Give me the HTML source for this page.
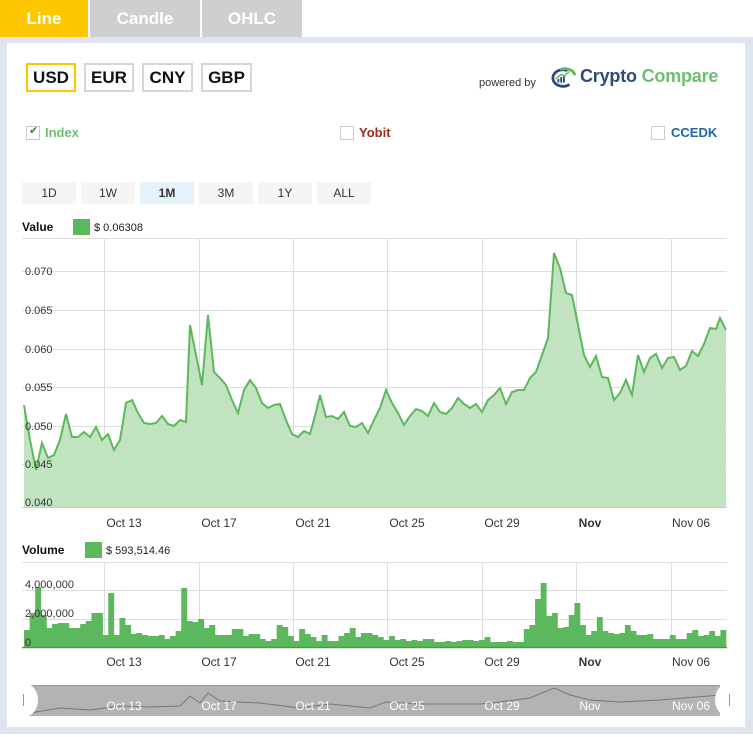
<!DOCTYPE html>
<html><head><meta charset="utf-8"><style>
*{margin:0;padding:0;box-sizing:border-box}
body{width:753px;height:737px;background:#fff;font-family:"Liberation Sans",sans-serif;position:relative;overflow:hidden}
.tab{position:absolute;top:0;height:37px;line-height:37px;text-align:center;color:#fff;font-weight:bold;font-size:17px}
.panel{position:absolute;left:0;top:37px;width:753px;height:697px;background:#dfe5ee}
.inner{position:absolute;left:7px;top:43px;width:738px;height:684px;background:#fff}
.cur{position:absolute;top:63px;height:29px;line-height:25px;border:2px solid #d6d6d6;font-weight:bold;font-size:17px;text-align:center;color:#111}
.rng{position:absolute;top:182px;height:22px;line-height:22px;background:#f5f5f5;font-size:12px;text-align:center;color:#333}
.cb{position:absolute;top:126px;width:14px;height:14px;border:1px solid #ccc}
.lab{position:absolute;font-size:13px;font-weight:bold}
.ax{font-size:11px;fill:#333;font-family:"Liberation Sans",sans-serif}
</style></head><body>
<div class="tab" style="left:0;width:88px;background:#fdc800">Line</div>
<div class="tab" style="left:90px;width:110px;background:#cfcfcf">Candle</div>
<div class="tab" style="left:202px;width:100px;background:#cfcfcf">OHLC</div>
<div class="panel"></div><div class="inner"></div>
<div class="cur" style="left:26px;width:50px;border-color:#fdc800">USD</div>
<div class="cur" style="left:84px;width:50px">EUR</div>
<div class="cur" style="left:142px;width:51px">CNY</div>
<div class="cur" style="left:201px;width:51px">GBP</div>
<div style="position:absolute;left:479px;top:77px;font-size:11px;color:#333">powered by</div>
<svg style="position:absolute;left:546px;top:66px" width="34" height="24" viewBox="0 0 34 26"><path d="M22 5 A11 9 0 1 0 24 20" fill="none" stroke="#2d4a7a" stroke-width="3"/><path d="M14 4 A11 9 0 0 1 30 10" fill="none" stroke="#5cb85c" stroke-width="3"/><rect x="11" y="14" width="2" height="4" fill="#2d4a7a"/><rect x="14" y="12" width="2" height="6" fill="#2d4a7a"/><rect x="17" y="10" width="2" height="8" fill="#2d4a7a"/><path d="M9 14 L15 9 L18 11 L24 6" stroke="#5cb85c" stroke-width="1.5" fill="none"/></svg>
<div style="position:absolute;left:580px;top:66px;font-size:18px;font-weight:bold;color:#2d4a7a;letter-spacing:-0.2px">Crypto <span style="color:#6cc070">Compare</span></div>
<div class="cb" style="left:26px"><span style="position:absolute;left:2px;top:-3px;font-size:11px;color:#3a7a3a">✔</span></div>
<div class="lab" style="left:45px;top:125px;color:#6cc070">Index</div>
<div class="cb" style="left:340px"></div>
<div class="lab" style="left:359px;top:125px;color:#9b2d14">Yobit</div>
<div class="cb" style="left:651px"></div>
<div class="lab" style="left:671px;top:125px;color:#1d65a6">CCEDK</div>
<div class="rng" style="left:22px;width:54px">1D</div>
<div class="rng" style="left:81px;width:54px">1W</div>
<div class="rng" style="left:140px;width:54px;background:#e6f2fa;font-weight:bold">1M</div>
<div class="rng" style="left:199px;width:54px">3M</div>
<div class="rng" style="left:258px;width:54px">1Y</div>
<div class="rng" style="left:317px;width:54px">ALL</div>
<svg style="position:absolute;left:0;top:0" width="753" height="737">
<g font-family="Liberation Sans,sans-serif">
<text x="22" y="231" font-size="12" font-weight="bold" fill="#111">Value</text>
<rect x="73" y="219" width="17" height="16" fill="#5cb85c"/>
<text x="94" y="231" font-size="11" fill="#222">$ 0.06308</text>
<text x="22" y="554" font-size="12" font-weight="bold" fill="#111">Volume</text>
<rect x="85" y="542" width="17" height="16" fill="#5cb85c"/>
<text x="106" y="554" font-size="11" fill="#222">$ 593,514.46</text>
</g>
<g stroke="#ddd" stroke-width="1">
<line x1="22" y1="238.5" x2="727" y2="238.5"/>
<line x1="22" y1="271.5" x2="727" y2="271.5"/><line x1="22" y1="310.5" x2="727" y2="310.5"/><line x1="22" y1="349.5" x2="727" y2="349.5"/><line x1="22" y1="387.5" x2="727" y2="387.5"/><line x1="22" y1="426.5" x2="727" y2="426.5"/><line x1="22" y1="464.5" x2="727" y2="464.5"/>
<line x1="22" y1="562.5" x2="727" y2="562.5"/><line x1="22" y1="590.5" x2="727" y2="590.5"/><line x1="22" y1="619.5" x2="727" y2="619.5"/>
<g><line x1="104.5" y1="238" x2="104.5" y2="507"/><line x1="199.5" y1="238" x2="199.5" y2="507"/><line x1="293.5" y1="238" x2="293.5" y2="507"/><line x1="387.5" y1="238" x2="387.5" y2="507"/><line x1="482.5" y1="238" x2="482.5" y2="507"/><line x1="576.5" y1="238" x2="576.5" y2="507"/><line x1="671.5" y1="238" x2="671.5" y2="507"/></g>
<g><line x1="104.5" y1="562" x2="104.5" y2="648"/><line x1="199.5" y1="562" x2="199.5" y2="648"/><line x1="293.5" y1="562" x2="293.5" y2="648"/><line x1="387.5" y1="562" x2="387.5" y2="648"/><line x1="482.5" y1="562" x2="482.5" y2="648"/><line x1="576.5" y1="562" x2="576.5" y2="648"/><line x1="671.5" y1="562" x2="671.5" y2="648"/></g>
</g>
<polygon fill="#c2e3c0" points="24,507 24,405 30,440 36,470 42,443 48,458 54,455 60,440 66,414 72,437 78,437 84,432 90,437 96,427 102,440 108,434 114,450 120,440 126,403 132,400 138,413 144,423 150,424 156,423 162,416 168,424 174,426 180,420 186,422 190,325 196,355 202,385 208,315 214,372 220,378 226,385 232,400 238,413 244,390 250,380 256,388 262,403 268,408 274,405 280,404 286,420 292,434 298,437 304,431 310,434 316,412 320,395 326,417 332,416 338,419 344,412 350,426 356,427 362,423 368,433 374,420 380,408 386,390 392,403 398,413 404,425 410,416 416,409 422,411 428,416 434,403 440,412 446,414 452,408 458,398 464,404 470,408 476,404 482,412 488,400 494,395 500,388 506,404 512,392 518,390 524,390 530,378 536,372 542,355 548,338 554,253 560,268 566,293 572,295 578,325 584,355 590,367 596,356 602,377 608,378 614,400 620,393 626,380 632,395 638,355 644,372 650,358 656,354 662,368 668,358 674,357 680,370 686,366 692,351 698,356 704,344 710,328 716,329 720,318 726,330 726,507"/>
<polyline fill="none" stroke="#5cb85c" stroke-width="2" points="24,405 30,440 36,470 42,443 48,458 54,455 60,440 66,414 72,437 78,437 84,432 90,437 96,427 102,440 108,434 114,450 120,440 126,403 132,400 138,413 144,423 150,424 156,423 162,416 168,424 174,426 180,420 186,422 190,325 196,355 202,385 208,315 214,372 220,378 226,385 232,400 238,413 244,390 250,380 256,388 262,403 268,408 274,405 280,404 286,420 292,434 298,437 304,431 310,434 316,412 320,395 326,417 332,416 338,419 344,412 350,426 356,427 362,423 368,433 374,420 380,408 386,390 392,403 398,413 404,425 410,416 416,409 422,411 428,416 434,403 440,412 446,414 452,408 458,398 464,404 470,408 476,404 482,412 488,400 494,395 500,388 506,404 512,392 518,390 524,390 530,378 536,372 542,355 548,338 554,253 560,268 566,293 572,295 578,325 584,355 590,367 596,356 602,377 608,378 614,400 620,393 626,380 632,395 638,355 644,372 650,358 656,354 662,368 668,358 674,357 680,370 686,366 692,351 698,356 704,344 710,328 716,329 720,318 726,330"/>
<line x1="22" y1="507.5" x2="727" y2="507.5" stroke="#ccc"/>
<g id="bars" fill="#5cb85c"></g>
<line x1="22" y1="647.5" x2="727" y2="647.5" stroke="#4a9a4a" stroke-width="1.5"/>
<g class="ax">
<text x="25" y="275" class="ax">0.070</text><text x="25" y="314" class="ax">0.065</text><text x="25" y="353" class="ax">0.060</text><text x="25" y="391" class="ax">0.055</text><text x="25" y="430" class="ax">0.050</text><text x="25" y="468" class="ax">0.045</text><text x="25" y="506" class="ax">0.040</text>
<text x="25" y="588" class="ax">4,000,000</text><text x="25" y="617" class="ax">2,000,000</text><text x="25" y="646" class="ax">0</text>
</g>
<g font-size="12" fill="#333" font-family="Liberation Sans,sans-serif" text-anchor="middle">
<text x="124" y="527">Oct 13</text><text x="219" y="527">Oct 17</text><text x="313" y="527">Oct 21</text><text x="407" y="527">Oct 25</text><text x="502" y="527">Oct 29</text><text x="590" y="527" font-weight="bold">Nov</text><text x="691" y="527">Nov 06</text>
<text x="124" y="666">Oct 13</text><text x="219" y="666">Oct 17</text><text x="313" y="666">Oct 21</text><text x="407" y="666">Oct 25</text><text x="502" y="666">Oct 29</text><text x="590" y="666" font-weight="bold">Nov</text><text x="691" y="666">Nov 06</text>
</g>
<rect x="28" y="685" width="692" height="31" fill="#b3b3b3"/>
<line x1="28" y1="685.5" x2="720" y2="685.5" stroke="#999"/>
<polyline fill="none" stroke="#777" stroke-width="1" points="30,713 60,708 90,710 120,706 150,707 180,706 190,696 200,703 208,693 220,701 260,703 300,708 330,704 370,708 386,702 420,704 480,704 500,702 530,698 554,688 570,695 590,700 620,702 660,700 720,695"/>
<g fill="#fff" font-size="12" font-family="Liberation Sans,sans-serif" text-anchor="middle">
<text x="124" y="710">Oct 13</text><text x="219" y="710">Oct 17</text><text x="313" y="710">Oct 21</text><text x="407" y="710">Oct 25</text><text x="502" y="710">Oct 29</text><text x="590" y="710">Nov</text><text x="691" y="710">Nov 06</text>
</g>
<ellipse cx="24" cy="700" rx="14" ry="17" fill="#fff"/><ellipse cx="729" cy="700" rx="14" ry="17" fill="#fff"/>
<line x1="23.5" y1="694" x2="23.5" y2="706" stroke="#999"/><line x1="729.5" y1="694" x2="729.5" y2="706" stroke="#999"/>
</svg>
<script>
var h=[14,28,50,27,16,19,20,20,16,16,19,22,28,28,10,45,10,24,18,11,12,10,9,9,10,7,9,13,49,22,21,23,16,18,10,10,10,15,15,9,11,11,7,5,7,18,17,9,5,15,11,8,5,10,5,5,9,12,16,8,12,12,10,8,6,9,6,7,5,6,5,7,7,4,4,5,4,5,6,6,5,6,8,4,4,4,5,4,4,15,18,40,53,26,28,16,17,27,37,18,10,13,25,13,12,11,12,18,13,10,10,11,7,7,7,10,7,7,12,14,9,10,13,9,14];
var g=document.getElementById('bars'),w=702/h.length,s='';
for(var i=0;i<h.length;i++){var v=Math.round(h[i]*1.2);s+='<rect x="'+(24+i*w).toFixed(2)+'" y="'+(647-v)+'" width="'+(w+0.3).toFixed(2)+'" height="'+v+'"/>';}
g.innerHTML=s;
</script>
</body></html>
